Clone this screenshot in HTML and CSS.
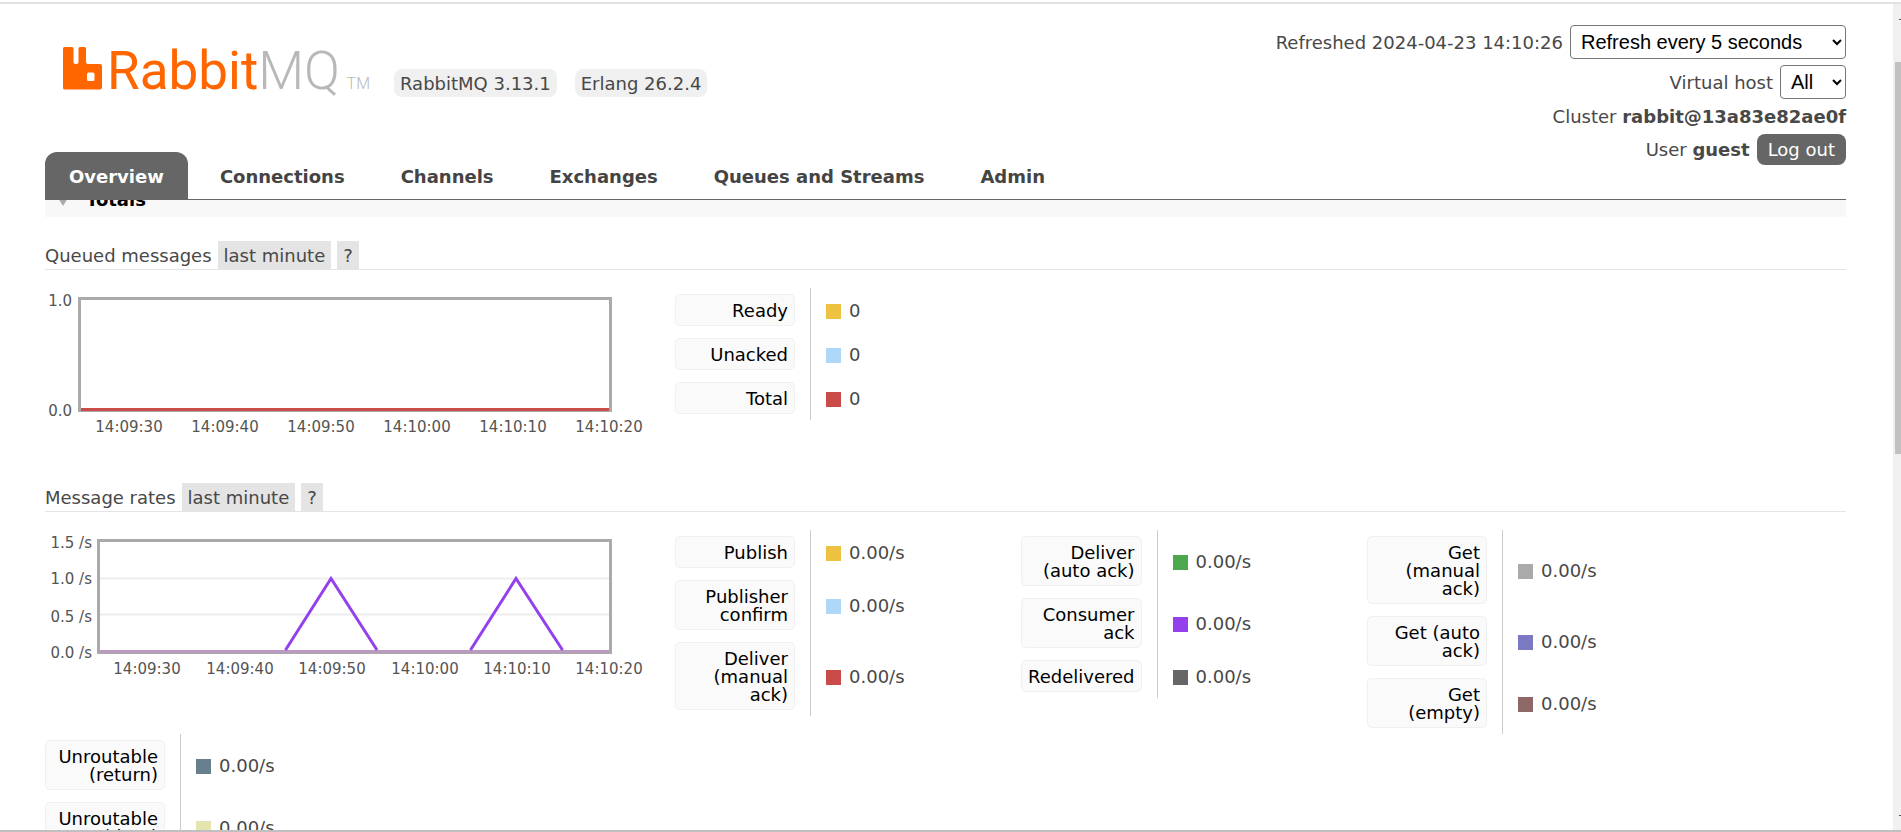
FILE: index.html
```html
<!DOCTYPE html>
<html lang="en">
<head>
<meta charset="utf-8">
<title>RabbitMQ Management</title>
<link rel="stylesheet" href="styles.css">
</head>
<body>
<div class="window">
  <div class="page">
    <header class="header">
      <div class="masthead">
        <div class="brand">
          <a class="logo" href="#" aria-label="RabbitMQ">
            <svg class="logo-mark" viewBox="0 0 39 43" aria-hidden="true"><path fill="#f60" fill-rule="evenodd" d="M1.500 0H9Q10.500 0 10.500 1.500V15Q10.500 17 12.500 17H13.500Q15.500 17 15.500 15V1.500Q15.500 0 17 0H21.500Q23 0 23 1.500V15Q23 17 25 17H37Q39 17 39 19V40.500Q39 42.500 37 42.500H1.500Q0 42.500 0 41V1.500Q0 0 1.500 0ZM25.500 25.500Q24 25.500 24 27V32.500Q24 34 25.500 34H30Q31.500 34 31.500 32.500V27Q31.500 25.500 30 25.500Z"/></svg>
            <span class="logo-word">Rabbit<span class="logo-mq">MQ</span></span><span class="logo-tm">TM</span>
          </a>
          <span class="version">RabbitMQ 3.13.1</span>
          <span class="version">Erlang 26.2.4</span>
        </div>
        <ul class="status">
          <li><label for="refresh">Refreshed 2024-04-23 14:10:26</label><select id="refresh" class="refresh"><option>Refresh every 5 seconds</option></select></li>
          <li><label for="vhost">Virtual host</label><select id="vhost" class="vhost"><option>All</option></select></li>
          <li><span>Cluster <b>rabbit@13a83e82ae0f</b></span></li>
          <li><span>User <b>guest</b></span><button class="logout" type="button">Log out</button></li>
        </ul>
      </div>
      <nav class="tabs">
        <a class="tab tab-selected" href="#">Overview</a>
        <a class="tab" href="#">Connections</a>
        <a class="tab" href="#">Channels</a>
        <a class="tab" href="#">Exchanges</a>
        <a class="tab" href="#">Queues and Streams</a>
        <a class="tab" href="#">Admin</a>
      </nav>
    </header>
    <main class="main">
      <h2 class="section-title">Totals</h2>

      <section class="stats">
        <h3 class="stats-title">Queued messages <button class="popup" type="button">last minute</button> <button class="popup" type="button">?</button></h3>
        <div class="stats-body">
          <svg class="chart" viewBox="0 0 630 195" role="img" aria-label="Queued messages, last minute">
            <rect class="chart-frame" x="34.500" y="10.500" width="531" height="112"/>
            <path class="line-total" d="M36 121.500H564"/>
            <g class="axis-y"><text x="27" y="18">1.0</text><text x="27" y="128">0.0</text></g>
            <g class="axis-x"><text x="84" y="144">14:09:30</text><text x="180" y="144">14:09:40</text><text x="276" y="144">14:09:50</text><text x="372" y="144">14:10:00</text><text x="468" y="144">14:10:10</text><text x="564" y="144">14:10:20</text></g>
          </svg>
          <table class="legend">
            <tr><th><span>Ready</span></th><td><i class="key ready"></i>0</td></tr>
            <tr><th><span>Unacked</span></th><td><i class="key unacked"></i>0</td></tr>
            <tr><th><span>Total</span></th><td><i class="key total"></i>0</td></tr>
          </table>
        </div>
      </section>

      <section class="stats">
        <h3 class="stats-title">Message rates <button class="popup" type="button">last minute</button> <button class="popup" type="button">?</button></h3>
        <div class="stats-body">
          <svg class="chart" viewBox="0 0 630 195" role="img" aria-label="Message rates, last minute">
            <path class="grid" d="M55 48.500H564M55 84.500H564"/>
            <rect class="chart-frame" x="53.500" y="10.500" width="512" height="112"/>
            <path class="line-idle" d="M55 121.500H564"/>
            <path class="line-ack" d="M240.500 120L286 48.500L332 120M425.500 120L471 48.500L517.500 120"/>
            <g class="axis-y"><text x="47" y="18">1.5 /s</text><text x="47" y="54">1.0 /s</text><text x="47" y="92">0.5 /s</text><text x="47" y="128">0.0 /s</text></g>
            <g class="axis-x"><text x="102" y="144">14:09:30</text><text x="195" y="144">14:09:40</text><text x="287" y="144">14:09:50</text><text x="380" y="144">14:10:00</text><text x="472" y="144">14:10:10</text><text x="564" y="144">14:10:20</text></g>
          </svg>
          <table class="legend">
            <tr><th><span>Publish</span></th><td><i class="key ready"></i>0.00/s</td></tr>
            <tr><th><span>Publisher confirm</span></th><td><i class="key unacked"></i>0.00/s</td></tr>
            <tr><th><span>Deliver (manual ack)</span></th><td><i class="key total"></i>0.00/s</td></tr>
          </table>
          <table class="legend">
            <tr><th><span>Deliver (auto ack)</span></th><td><i class="key auto-ack"></i>0.00/s</td></tr>
            <tr><th><span>Consumer ack</span></th><td><i class="key consumer-ack"></i>0.00/s</td></tr>
            <tr><th><span>Redelivered</span></th><td><i class="key redelivered"></i>0.00/s</td></tr>
          </table>
          <table class="legend">
            <tr><th><span>Get (manual ack)</span></th><td><i class="key get-manual"></i>0.00/s</td></tr>
            <tr><th><span>Get (auto ack)</span></th><td><i class="key get-auto"></i>0.00/s</td></tr>
            <tr><th><span>Get (empty)</span></th><td><i class="key get-empty"></i>0.00/s</td></tr>
          </table>
          <table class="legend">
            <tr><th><span>Unroutable (return)</span></th><td><i class="key return"></i>0.00/s</td></tr>
            <tr><th><span>Unroutable (drop)</span></th><td><i class="key drop"></i>0.00/s</td></tr>
          </table>
        </div>
      </section>
    </main>
  </div>
  <div class="scrollbar" aria-hidden="true"><div class="scroll-arrow"></div><div class="scroll-thumb"></div><div class="scroll-arrow scroll-arrow-down"></div></div>
</div>
</body>
</html>
```
FILE: styles.css
```css
* {
  box-sizing: border-box;
}

body {
  margin: 0;
  padding-top: 2px;
  height: 100vh;
  overflow: hidden;
  background: #fff;
  color: #484848;
  font: 18px/22px Verdana, "DejaVu Sans", sans-serif;
}

.window {
  display: grid;
  grid-template-columns: minmax(0, 1fr) 8px;
  height: 100%;
  border-top: 2px solid #e2e2e4;
  border-bottom: 2px solid #c0c0c0;
}

.page {
  display: flex;
  flex-direction: column;
  min-height: 0;
  padding: 0 47px 0 45px;
  overflow: hidden;
}

/* Header */

.header {
  position: relative;
  z-index: 1;
  flex: none;
  background: #fff;
  border-bottom: 1px solid #666;
}

.masthead {
  display: flex;
  justify-content: space-between;
  height: 148px;
}

.brand {
  display: flex;
  align-items: flex-start;
  gap: 18px;
  padding: 43px 0 0 18px;
}

.logo {
  display: flex;
  align-items: flex-end;
  height: 43px;
  width: 313px;
  color: #f60;
  font-family: Roboto, "Liberation Sans", Arial, sans-serif;
  text-decoration: none;
}

.logo-mark {
  width: 39px;
  height: 43px;
  margin-right: 5px;
}

.logo-word {
  font-size: 53px;
  line-height: 38px;
}

.logo-mq,
.logo-tm {
  color: #b8b8b8;
  font-weight: 300;
}

.logo-tm {
  margin-left: auto;
  padding-right: 6px;
  font-size: 16px;
  line-height: 12px;
}

.version {
  margin-top: 22px;
  padding: 4px 6px 2px;
  border-radius: 8px;
  background: #f0f0f0;
}

.status {
  display: flex;
  flex-direction: column;
  gap: 6px;
  margin: 0;
  padding: 21px 0 0;
  list-style: none;
}

.status li {
  display: flex;
  align-items: center;
  justify-content: flex-end;
  gap: 7px;
}

.status label,
.status span {
  padding-top: 1px;
}

.status select {
  height: 34px;
  padding: 0 4px 0 6px;
  border: 1px solid #767676;
  border-radius: 4px;
  background-color: #fff;
  color: #000;
  font: 20px "Liberation Sans", Arial, sans-serif;
}

.status .refresh {
  width: 276px;
}

.status .vhost {
  width: 66px;
}

.logout {
  height: 31px;
  padding: 1px 11px 0;
  border: 0;
  border-radius: 8px;
  background: #666;
  color: #fff;
  font: inherit;
}

.tabs {
  display: flex;
  gap: 8px;
}

.tab {
  padding: 14px 24px 11px;
  border-radius: 12px 12px 0 0;
  color: #444;
  font-weight: bold;
  text-decoration: none;
}

.tab-selected {
  background: #666;
  color: #fff;
}

/* Totals */

.main {
  flex: none;
}

.section-title {
  display: flex;
  align-items: center;
  gap: 18px;
  height: 36px;
  margin: -19px 0 24px;
  padding: 2px 0 0 13px;
  background: #f8f8f8;
  color: #000;
  font-size: 18px;
}

.section-title::before {
  content: "";
  margin-top: 4px;
  border: 5px solid transparent;
  border-top: 8px solid #aaa;
  border-bottom: 0;
}

.stats-title {
  display: flex;
  align-items: flex-end;
  gap: 6px;
  margin: 0;
  border-bottom: 1px solid #e4e4e4;
  font-size: 18px;
  font-weight: normal;
  line-height: 26px;
}

.popup {
  height: 28px;
  padding: 2px 6px 0;
  border: 0;
  background: #e4e4e4;
  color: inherit;
  font: inherit;
}

.stats-body {
  display: flex;
  flex-wrap: wrap;
  align-items: flex-start;
  padding-top: 18px;
}

.chart {
  display: block;
  width: 630px;
  height: 195px;
}

.chart-frame {
  fill: none;
  stroke: #aaa;
  stroke-width: 3;
}

.grid {
  stroke: #eee;
  stroke-width: 2;
}

.line-total,
.line-idle,
.line-ack {
  fill: none;
  stroke-width: 3;
}

.line-total {
  stroke: #cb4b4b;
}

.line-idle {
  stroke: #b99bc0;
}

.line-ack {
  stroke: #9440ed;
}

.axis-x,
.axis-y {
  fill: #545454;
  font-size: 15px;
}

.axis-x {
  text-anchor: middle;
}

.axis-y {
  text-anchor: end;
}

/* Legends */

.legend {
  width: 346px;
  border-collapse: separate;
  border-spacing: 0;
}

.legend th {
  width: 136px;
  padding: 6px 15px 6px 0;
  border-right: 1px solid #ccc;
  font-weight: normal;
  line-height: 18px;
  text-align: right;
}

.legend th span {
  display: block;
  padding: 7px 6px 5px;
  border: 1px solid #f0f0f0;
  border-radius: 5px;
  background: #fafafa;
  color: #000;
}

.legend td {
  padding: 2px 15px 0;
  line-height: 18px;
}

.key {
  display: inline-block;
  width: 15px;
  height: 15px;
  margin-right: 8px;
  vertical-align: -2px;
}

.ready { background: #edc240; }
.unacked { background: #afd8f8; }
.total { background: #cb4b4b; }
.auto-ack { background: #4da74d; }
.consumer-ack { background: #9440ed; }
.redelivered { background: #666; }
.get-manual { background: #aaa; }
.get-auto { background: #7c79c3; }
.get-empty { background: #8e6767; }
.return { background: #67808e; }
.drop { background: #e5e4ae; }

/* Window scrollbar */

.scrollbar {
  display: flex;
  flex-direction: column;
  align-items: flex-end;
  background: #f0f0f0;
}

.scroll-arrow {
  width: 2px;
  height: 1px;
  margin: 15px 0 42px;
  background: #505050;
}

.scroll-thumb {
  width: 6px;
  height: 47.5%;
  background: #c1c1c1;
}

.scroll-arrow-down {
  margin: auto 0 14px;
}
```
